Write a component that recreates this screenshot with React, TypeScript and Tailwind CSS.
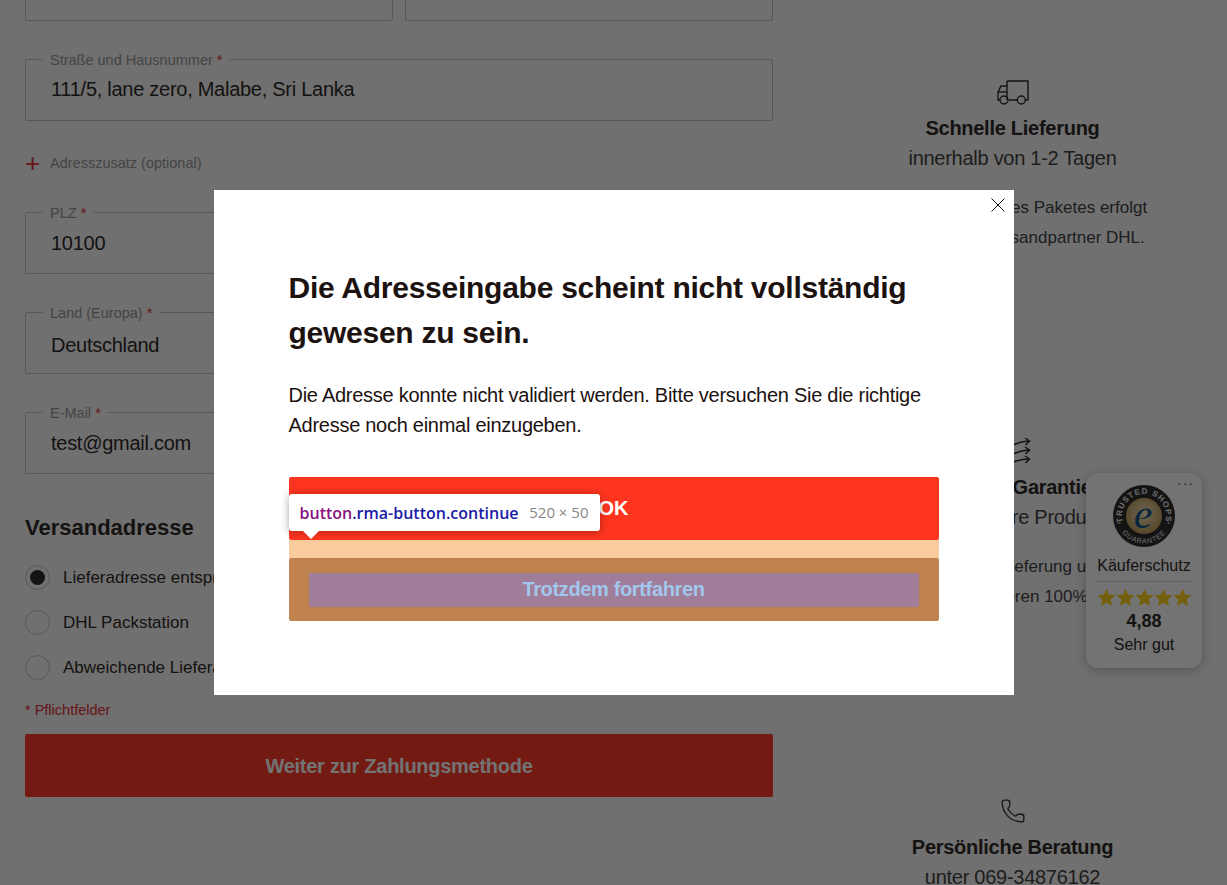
import React from 'react';
import { Phone } from 'lucide-react';

const Field: React.FC<{ label: string; value: string; className?: string; valueClass?: string }> = ({
  label,
  value,
  className = '',
  valueClass = '',
}) => (
  <div className={`relative h-[62px] rounded-[2px] border border-[#c4c4c4] ${className}`}>
    <span className="absolute -top-[10px] left-[17px] bg-[#f8f8f8] px-[7px] text-[14.5px] leading-[20px] text-[#999]">
      {label} <span className="text-[#e0303a]">*</span>
    </span>
    <div className={`flex h-full items-center pl-[25px] text-[20px] tracking-[-0.27px] text-[#2f2a28] ${valueClass}`}>{value}</div>
  </div>
);

const Radio: React.FC<{ label: string; checked?: boolean }> = ({ label, checked }) => (
  <div className="flex h-[45px] items-center gap-[13px]">
    <span className="flex h-[25px] w-[25px] items-center justify-center rounded-full border border-[#c4c4c4]">
      {checked && <span className="h-[15px] w-[15px] rounded-full bg-[#2f2a28]" />}
    </span>
    <span className="text-[17px] text-[#2f2a28]">{label}</span>
  </div>
);

const Benefit: React.FC<{ icon: React.ReactNode; title: string; sub: string; lines?: string[]; className?: string }> = ({
  icon,
  title,
  sub,
  lines,
  className = '',
}) => (
  <div className={`flex h-[359px] flex-col items-center text-center text-[#2f2a28] ${className}`}>
    <div className="flex h-[26px] items-center justify-center">{icon}</div>
    <div className="mt-[8px] text-[20px] font-bold leading-[30px] tracking-[-0.27px]">{title}</div>
    <div className="text-[20px] leading-[30px] tracking-[-0.27px] text-[#444]">{sub}</div>
    {lines && (
      <div className="mt-[20px] text-[17px] leading-[30px] text-[#444]">
        {lines.map((l) => (
          <div key={l}>{l}</div>
        ))}
      </div>
    )}
  </div>
);

const TruckIcon = () => (
  <svg width="32" height="26" viewBox="0 0 32 26" fill="none" stroke="#2f2a28" strokeWidth="1.4">
    <path d="M10 2H31V21H28.5M20 21H12M10 21V2" />
    <path d="M10 7H4L1 13V21H3" />
    <path d="M1 13H10" />
    <circle cx="7" cy="21" r="4" />
    <circle cx="24.3" cy="21" r="4" />
  </svg>
);

const ArrowsIcon = () => (
  <svg width="36" height="26" viewBox="0 0 36 26" fill="none" stroke="#2f2a28" strokeWidth="1.5">
    <path d="M14 8C22 6 26 3 34 3M30 0L34.5 3L30.5 7" />
    <path d="M14 17C22 15 26 12 34 12M30 9L34.5 12L30.5 16" />
    <path d="M14 25C22 23 26 21 34 21M30 18L34.5 21L30.5 25" />
  </svg>
);

const GoldStar = () => (
  <svg width="19" height="19" viewBox="0 0 24 24" fill="#ffd21f">
    <polygon points="12,1 15.2,8.6 23.4,9.3 17.2,14.7 19.1,22.8 12,18.5 4.9,22.8 6.8,14.7 0.6,9.3 8.8,8.6" />
  </svg>
);

const TrustedLogo = () => (
  <svg width="62" height="62" viewBox="0 0 62 62">
    <defs>
      <radialGradient id="gold" cx="50%" cy="45%" r="60%">
        <stop offset="0%" stopColor="#f6e7bd" />
        <stop offset="100%" stopColor="#b8964f" />
      </radialGradient>
      <path id="arcTop" d="M13 43.6A22 22 0 1 1 49 43.6" />
      <path id="arcBottom" d="M3.5 31a27.5 27.5 0 0 0 55 0" />
    </defs>
    <circle cx="31" cy="31" r="31" fill="#2e2e2e" />
    <circle cx="31" cy="31" r="18" fill="url(#gold)" />
    <circle cx="6.5" cy="38" r="1" fill="#d8c48a" />
    <circle cx="55.5" cy="38" r="1" fill="#d8c48a" />
    <text fontFamily="'Liberation Sans', sans-serif" fontSize="8" fontWeight="700" fill="#f2f2f2" letterSpacing="1">
      <textPath href="#arcTop" startOffset="50%" textAnchor="middle">TRUSTED SHOPS</textPath>
    </text>
    <text fontFamily="'Liberation Sans', sans-serif" fontSize="7" fill="#f2f2f2" letterSpacing="0.8">
      <textPath href="#arcBottom" startOffset="50%" textAnchor="middle">GUARANTEE</textPath>
    </text>
    <text x="30" y="43" textAnchor="middle" fontFamily="'Liberation Serif', serif" fontStyle="italic" fontSize="42" fill="#14558f">e</text>
  </svg>
);

export default function App() {
  return (
    <div className="relative h-[885px] overflow-hidden bg-[#f8f8f8] font-['Liberation_Sans',Arial,sans-serif]">
      <div className="-mt-[42px] flex">
        {/* Checkout form */}
        <div className="ml-[25px] w-[748px] shrink-0">
          <div className="grid grid-cols-2 gap-[12px]">
            <div className="h-[63px] rounded-[2px] border border-[#c4c4c4]" />
            <div className="h-[63px] rounded-[2px] border border-[#c4c4c4]" />
          </div>
          <Field label="Straße und Hausnummer" value="111/5, lane zero, Malabe, Sri Lanka" className="mt-[38px]" valueClass="pb-[2px]" />
          <div className="flex h-[91px] items-center pb-[6px]">
            <span className="w-[25px] pb-[2px] text-[26px] leading-none text-[#e0303a]">+</span>
            <span className="text-[14.5px] text-[#999]">Adresszusatz (optional)</span>
          </div>
          <Field label="PLZ" value="10100" />
          <Field label="Land (Europa)" value="Deutschland" className="mt-[38px]" valueClass="pt-[4px]" />
          <Field label="E-Mail" value="test@gmail.com" className="mt-[38px]" />
          <h2 className="mt-[41px] text-[22px] font-bold leading-[26px] text-[#2f2a28]">Versandadresse</h2>
          <div className="mt-[14px]">
            <Radio label="Lieferadresse entspricht Rechnungsadresse" checked />
            <Radio label="DHL Packstation" />
            <Radio label="Abweichende Lieferadresse" />
          </div>
          <div className="mt-[10px] text-[14.5px] leading-[20px] text-[#e0303a]">* Pflichtfelder</div>
          <div className="mt-[14px] flex h-[63px] items-center justify-center rounded-[2px] bg-[#ff3b2a] text-[20px] font-bold tracking-[-0.27px] text-white">
            Weiter zur Zahlungsmethode
          </div>
        </div>

        {/* Benefits */}
        <div className="ml-[47px] w-[385px] pt-[121px]">
          <Benefit
            icon={<TruckIcon />}
            title="Schnelle Lieferung"
            sub="innerhalb von 1-2 Tagen"
            lines={['Die Zustellung Ihres Paketes erfolgt', 'über unseren Versandpartner DHL.']}
          />
          <Benefit
            icon={<ArrowsIcon />}
            title="Kunden-Garantie"
            sub="auf all unsere Produkte"
            lines={['Bei kurzer Lieferung und', '& garantieren 100%']}
          />
          <Benefit
            icon={<Phone size={26} strokeWidth={1.2} />}
            title="Persönliche Beratung"
            sub="unter 069-34876162"
            className="mt-px"
          />
        </div>
      </div>

      {/* Trusted Shops badge */}
      <div className="absolute left-[1086px] top-[473px] flex h-[195px] w-[116px] flex-col items-center rounded-[12px] bg-white pt-[12px] text-[#2f2a28] shadow-[0_2px_12px_rgba(0,0,0,0.25)]">
        <span className="absolute right-[8px] top-[0px] text-[14px] leading-[20px] tracking-[1px] text-[#555]">···</span>
        <TrustedLogo />
        <div className="mt-[7px] text-[16px] leading-[24px]">Käuferschutz</div>
        <div className="mt-[3px] h-px w-[96px] bg-[#d8d8d8]" />
        <div className="mt-[6px] flex">
          {[0, 1, 2, 3, 4].map((i) => (
            <GoldStar key={i} />
          ))}
        </div>
        <div className="mt-[2px] text-[18px] font-bold leading-[24px]">4,88</div>
        <div className="text-[16px] leading-[24px]">Sehr gut</div>
      </div>

      {/* Modal overlay */}
      <div className="absolute inset-0 flex items-center justify-center bg-black/[0.55]">
        <div className="relative h-[505px] w-[800px] bg-white p-[75px] text-[#1c1210]">
          <svg className="absolute right-[9px] top-[8px]" width="14" height="14" viewBox="0 0 14 14" stroke="#111" strokeWidth="1">
            <path d="M0.5 0.5L13.5 13.5M13.5 0.5L0.5 13.5" />
          </svg>
          <h1 className="text-[30px] font-bold leading-[45px] tracking-[-0.26px]">
            Die Adresseingabe scheint nicht vollständig gewesen zu sein.
          </h1>
          <p className="mt-[25px] text-[20px] leading-[30px] tracking-[-0.27px]">
            Die Adresse konnte nicht validiert werden. Bitte versuchen Sie die richtige Adresse noch einmal einzugeben.
          </p>
          <div className="relative mt-[37px]">
            <div className="flex h-[63px] items-center justify-center rounded-[2px] bg-[#ff3520] pb-[2px] text-[20px] font-bold text-white">
              OK
            </div>
            <div className="h-[18px] bg-[#f9cc9d]" />
            <div className="rounded-[2px] bg-[#c0834f] px-[20px] pb-[14px] pt-[15px]">
              <div className="flex h-[34px] items-center justify-center bg-[#a07e9a] pb-[2px] text-[20px] font-bold tracking-[-0.35px] text-[#a3c6ec]">
                Trotzdem fortfahren
              </div>
            </div>

            {/* Inspector tooltip */}
            <div className="absolute left-0 top-[17px] flex h-[37px] w-[311px] items-center justify-between rounded-[3px] bg-white px-[11px] font-['Open_Sans',sans-serif] shadow-[0_1px_8px_rgba(0,0,0,0.35)]">
              <span className="text-[16px] font-semibold text-[#1a1aa6]">
                <span className="text-[#881280]">button</span>.rma-button.continue
              </span>
              <span className="text-[15px] text-[#888]">520 × 50</span>
              <span className="absolute left-[14px] top-[37px] h-0 w-0 border-x-[8px] border-t-[8px] border-x-transparent border-t-white" />
            </div>
          </div>
        </div>
      </div>
    </div>
  );
}
